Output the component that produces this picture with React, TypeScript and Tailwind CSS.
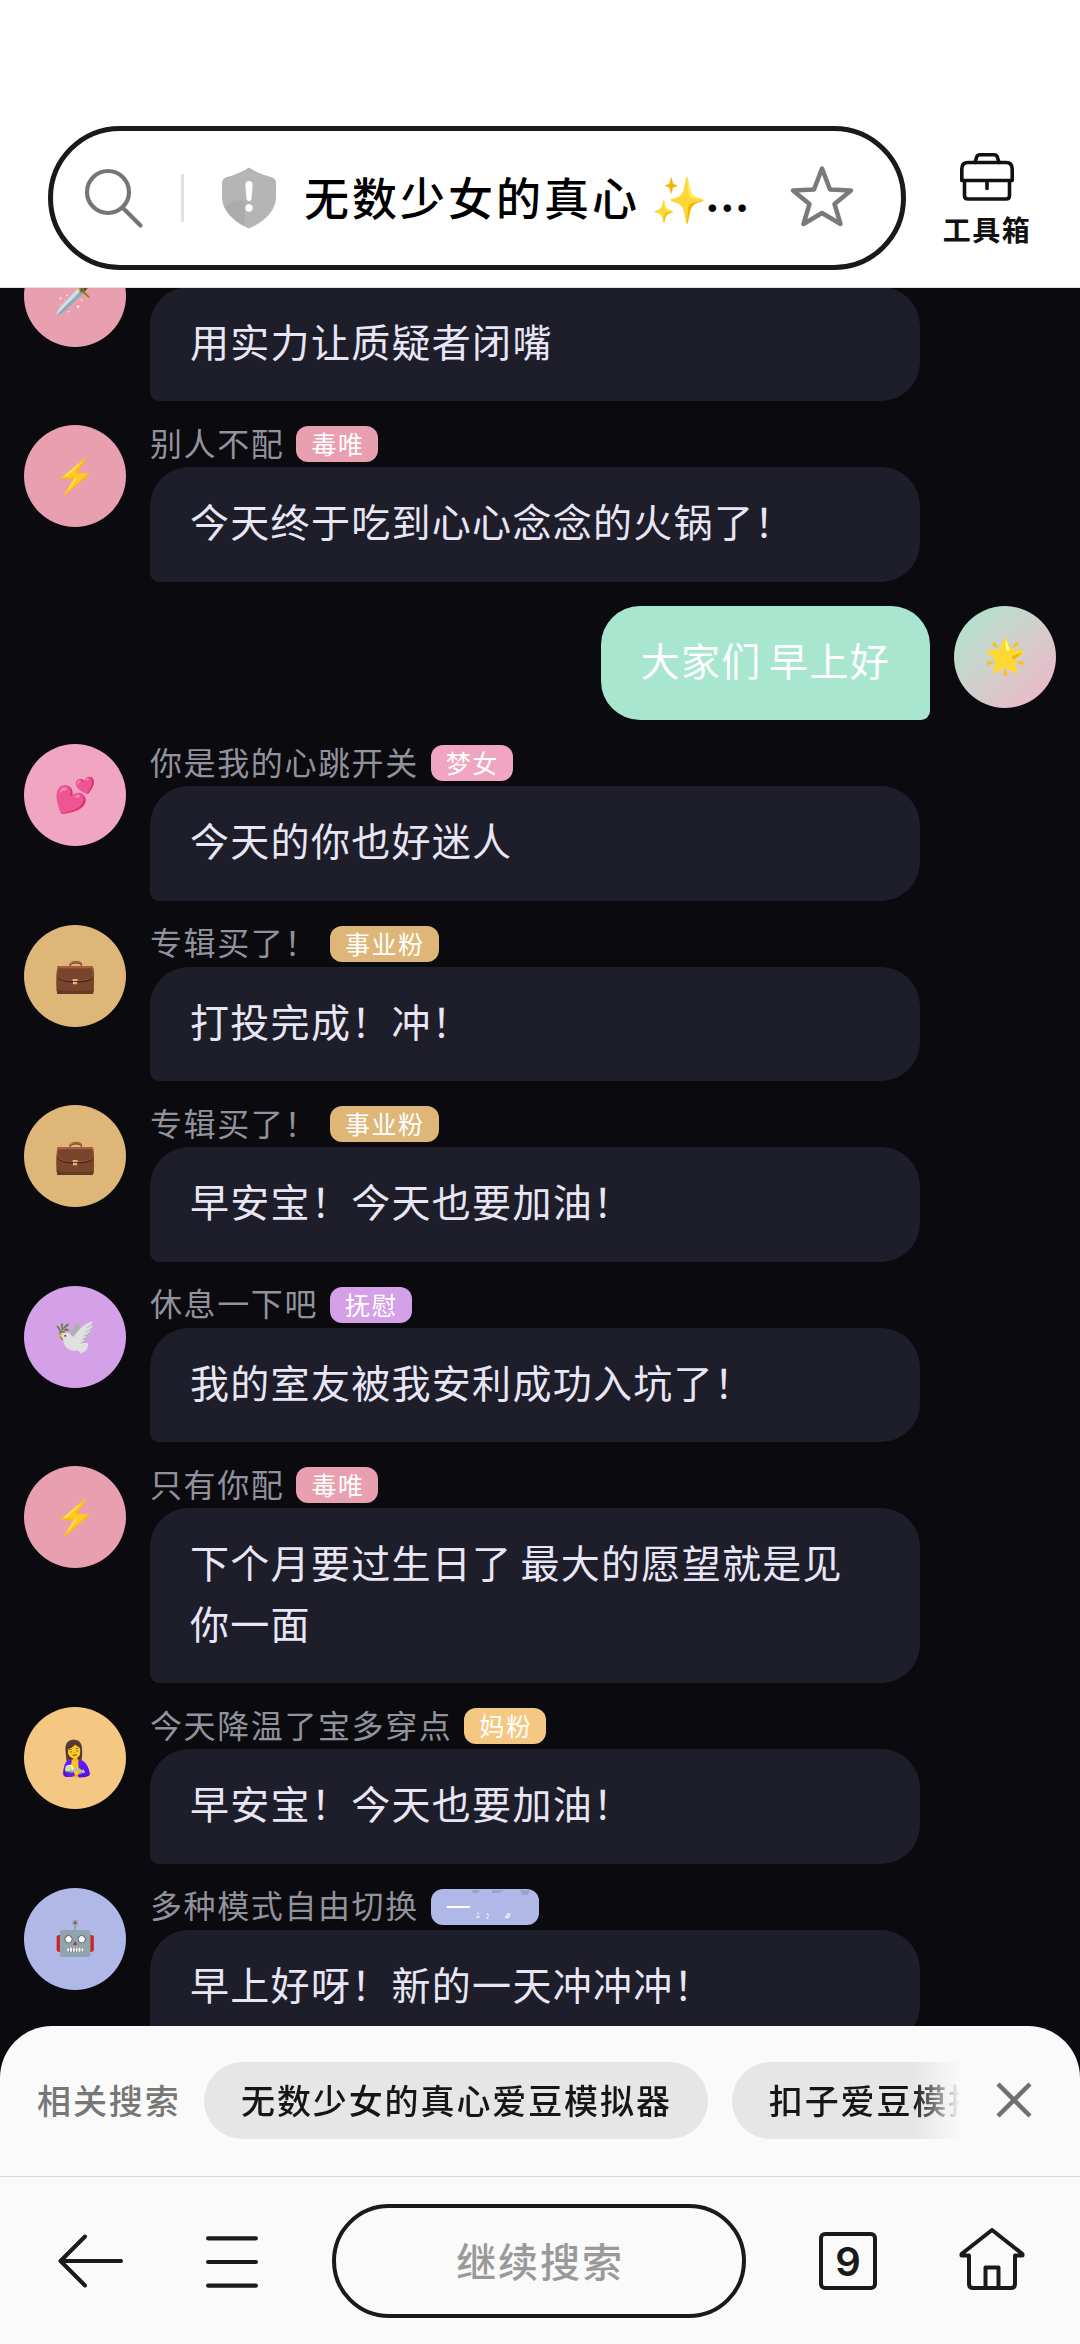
import type { ReactNode } from "react"

type Message = {
  own?: boolean
  name?: string
  tag?: string
  text: string
  avatar: string
  color: string
}

const messages: Message[] = [
  { text: "用实力让质疑者闭嘴", avatar: "🗡️", color: "bg-[#e8a0b0]" },
  { name: "别人不配", tag: "毒唯", text: "今天终于吃到心心念念的火锅了！", avatar: "⚡", color: "bg-[#e8a0b0]" },
  { own: true, text: "大家们 早上好", avatar: "🌟", color: "bg-linear-135 from-[#a8e6cf] to-[#f0b4c8]" },
  { name: "你是我的心跳开关", tag: "梦女", text: "今天的你也好迷人", avatar: "💕", color: "bg-[#f0a6c0]" },
  { name: "专辑买了！", tag: "事业粉", text: "打投完成！冲！", avatar: "💼", color: "bg-[#deb778]" },
  { name: "专辑买了！", tag: "事业粉", text: "早安宝！今天也要加油！", avatar: "💼", color: "bg-[#deb778]" },
  { name: "休息一下吧", tag: "抚慰", text: "我的室友被我安利成功入坑了！", avatar: "🕊️", color: "bg-[#d4a0e8]" },
  { name: "只有你配", tag: "毒唯", text: "下个月要过生日了 最大的愿望就是见你一面", avatar: "⚡", color: "bg-[#e8a0b0]" },
  { name: "今天降温了宝多穿点", tag: "妈粉", text: "早安宝！今天也要加油！", avatar: "🤱", color: "bg-[#f4c882]" },
  { name: "多种模式自由切换", tag: "一", text: "早上好呀！新的一天冲冲冲！", avatar: "🤖", color: "bg-[#b0b8e8]" },
]

function Avatar({ color, children }: { color: string; children: ReactNode }) {
  return (
    <div className={`flex size-[102px] shrink-0 items-center justify-center rounded-full pb-[5px] text-[34px] leading-none ${color}`}>
      {children}
    </div>
  )
}

function Tag({ color, text }: { color: string; text: string }) {
  return (
    <span
      className={`flex h-9 items-center rounded-[12px] pr-[14px] pb-px pl-[15px] text-[25px] leading-none tracking-[1.5px] text-white ${color}`}
    >
      {text}
      {text.length === 1 && <TagSmudge />}
    </span>
  )
}

// Unreadable remainder of the last tag
function TagSmudge() {
  return (
    <svg width="53" height="36" viewBox="0 0 53 36" fill="none" className="-mb-px overflow-visible">
      <g fill="#8f93ba" opacity="0.6">
        <path d="M0 1h8l-2 3h-5zM20 1h12l-5 3h-7zM48 1h10l-2 5h-6z" />
      </g>
      <g stroke="#fff" strokeWidth="1.500" strokeLinecap="round" opacity="0.75">
        <path d="M6 24v1M5 28.500l2-1M15.500 25l1 1M16 28.500l-1 .5M36.500 24.500l-3 4M38 25l-1.500 3.500h-2" />
      </g>
    </svg>
  )
}

function ChatRow({ message }: { message: Message }) {
  const { own, name, tag, text, avatar, color } = message

  if (own) {
    return (
      <div className="flex items-start justify-end gap-6">
        <div className="rounded-[39px] rounded-br-[9px] bg-[#a8e6cf] px-10 pt-[23px] pb-[31px] text-[39px] leading-[60.45px] tracking-[1.3px] [word-spacing:-2.5px] text-white">
          {text}
        </div>
        <Avatar color={color}>{avatar}</Avatar>
      </div>
    )
  }

  return (
    <div className="flex items-start gap-6">
      <Avatar color={color}>{avatar}</Avatar>
      <div className="w-[770px]">
        <div className="mb-1 flex h-[38px] items-center gap-3">
          {name && <span className="pb-[5px] text-[32px] leading-none tracking-[1.6px] text-[#92929c]">{name}</span>}
          {tag && <Tag color={color} text={tag} />}
        </div>
        <div className="rounded-[39px] rounded-bl-[9px] bg-[#1e1e2a] px-10 pt-[23px] pb-[31px] text-[39px] leading-[60.45px] tracking-[1.3px] [word-spacing:-2px] text-[#e8e6f5]">
          {text}
        </div>
      </div>
    </div>
  )
}

function AddressBar() {
  return (
    <header className="flex h-72 shrink-0 items-start border-b border-[#dfe3df] bg-white pt-[126px] pl-12">
      <div className="flex h-36 w-[858px] items-center rounded-full border-5 border-[#1a1a1a] pl-[30px]">
        <svg width="62" height="62" viewBox="0 0 62 62" fill="none" stroke="#757575" strokeWidth="4.200" strokeLinecap="round">
          <circle cx="25" cy="25" r="21" />
          <path d="M40 41 57.500 58.500" />
        </svg>
        <div className="ml-9 h-12 w-[3px] bg-[#e2e2e2]" />
        <svg width="54" height="62" viewBox="0 0 54 62" className="ml-[38px]">
          <path
            d="M27 0.500C32 4 41 8 49 10q5 1.500 5 6v14C54 44 42 55 27 61.500C12 55 0 44 0 30V16q0-4.500 5-6C13 8 22 4 27 0.500z"
            fill="#b5b5b5"
          />
          <path d="M8 36q8-6 16 0l-2 23C14 55 7 48 3 41z" fill="#a5a5a5" opacity="0.6" />
          <path d="M27 14q4 0 3.600 5l-1 12q-.4 3-2.600 3t-2.600-3l-1-12Q23 14 27 14z" fill="#fff" />
          <circle cx="27" cy="41" r="3.700" fill="#fff" />
        </svg>
        <div className="ml-7 flex w-[449px] items-center pb-1 text-[45px] leading-none font-medium tracking-[3px] whitespace-pre text-black">
          无数少女的真心
          <span className="ml-[11px] text-[45px] tracking-normal">✨</span>
          <span className="-ml-[2px] font-['Inter'] text-[44px] font-bold tracking-[0.2px]">...</span>
        </div>
        <svg width="66" height="66" viewBox="0 0 66 66" fill="none" stroke="#7a7a7a" strokeWidth="4.500" strokeLinejoin="round" className="mb-[5px] ml-9">
          <path d="M33 5.500 41 26.500 62 27.500 45.500 41 51.500 61 33 50 14.500 61 20.500 41 4 27.500 25 26.500z" />
        </svg>
      </div>
      <div className="mt-[27px] ml-[37px] flex w-[88px] flex-col items-center">
        <svg width="54" height="48" viewBox="0 0 54 48" fill="none" stroke="#111" strokeWidth="3.600" strokeLinejoin="round" strokeLinecap="round">
          <path d="M15 9.500 16.500 4.500Q17.200 1.800 20 1.800H34Q36.800 1.800 37.500 4.500L39 9.500" />
          <path d="M1.800 27.500V16Q1.800 9.500 8 9.500H46Q52.200 9.500 52.200 16V27.500z" />
          <path d="M4.500 28V42.500Q4.500 46 8 46H46Q49.500 46 49.500 42.500V28M27 28V35.500" />
        </svg>
        <span className="mt-3 text-[28px] leading-[32px] font-bold tracking-[1.5px] whitespace-nowrap text-[#111]">工具箱</span>
      </div>
    </header>
  )
}

function RelatedSearches() {
  return (
    <div className="flex h-[151px] items-center border-b border-[#d9d9d9] pb-[2px] pl-[37px]">
      <span className="w-[167px] shrink-0 text-[34px] leading-none font-medium tracking-[1.9px] text-[#777]">相关搜索</span>
      <div className="flex w-[757px] shrink-0 gap-6 overflow-hidden mask-r-from-[710px] mask-r-to-[757px]">
        {["无数少女的真心爱豆模拟器", "扣子爱豆模拟器"].map((keyword) => (
          <span
            key={keyword}
            className="flex h-[77px] shrink-0 items-center rounded-full bg-[#e6e6e6] pr-9 pl-[37px] text-[34px] leading-none font-medium tracking-[1.9px] text-[#161616]"
          >
            {keyword}
          </span>
        ))}
      </div>
      <svg width="36" height="36" viewBox="0 0 36 36" stroke="#707070" strokeWidth="4.500" className="ml-[35px]">
        <path d="M2 2 34 34M34 2 2 34" />
      </svg>
    </div>
  )
}

function NavBar() {
  return (
    <nav className="flex h-[167px] items-start pt-[27px] pl-[58px] text-[#1a1a1a]">
      <svg width="66" height="114" viewBox="0 0 66 114" fill="none" stroke="currentColor" strokeWidth="4" strokeLinecap="round" strokeLinejoin="round">
        <path d="M27 32.500 2.500 57 27 81.500M2.500 57H63" />
      </svg>
      <svg width="52" height="114" viewBox="0 0 52 114" stroke="currentColor" strokeWidth="4.200" strokeLinecap="round" className="ml-[82px]">
        <path d="M2.100 34.300H49.900M2.100 58H49.900M2.100 81.600H49.900" />
      </svg>
      <div className="ml-[74px] flex h-[114px] w-[414px] items-center justify-center rounded-full border-4 border-[#1a1a1a] pb-[2px] pl-[2px] text-[40px] leading-none font-medium tracking-[1.9px] text-[#999]">
        继续搜索
      </div>
      <div className="mt-7 ml-[73px] flex size-[58px] items-center justify-center rounded-[6px] border-4 border-[#1a1a1a] pt-px font-['Inter'] text-[40px] leading-none font-semibold">
        9
      </div>
      <svg width="66" height="114" viewBox="0 0 66 114" fill="none" stroke="currentColor" strokeWidth="4" strokeLinejoin="round" strokeLinecap="round" className="ml-[82px]">
        <path d="M10 51.500H2.500V50L33 26 63.500 50V51.500H56V80Q56 84 52 84H14Q10 84 10 80z" />
        <path d="M26.500 84V63.500H39.500V84" />
      </svg>
    </nav>
  )
}

export default function App() {
  return (
    <div className="flex h-[2344px] w-[1080px] flex-col overflow-hidden bg-[#0a0a0f] font-['Noto_Sans_CJK_SC',sans-serif]">
      <AddressBar />
      <main className="h-[1738px] shrink-0">
        <div className="h-[1830px] overflow-hidden px-6">
          <div className="-mt-[43px] flex flex-col gap-6">
            {messages.map((message, index) => (
              <ChatRow key={index} message={message} />
            ))}
          </div>
        </div>
      </main>
      <footer className="relative shrink-0 rounded-t-[52px] bg-[#fafafa]">
        <RelatedSearches />
        <NavBar />
      </footer>
    </div>
  )
}
